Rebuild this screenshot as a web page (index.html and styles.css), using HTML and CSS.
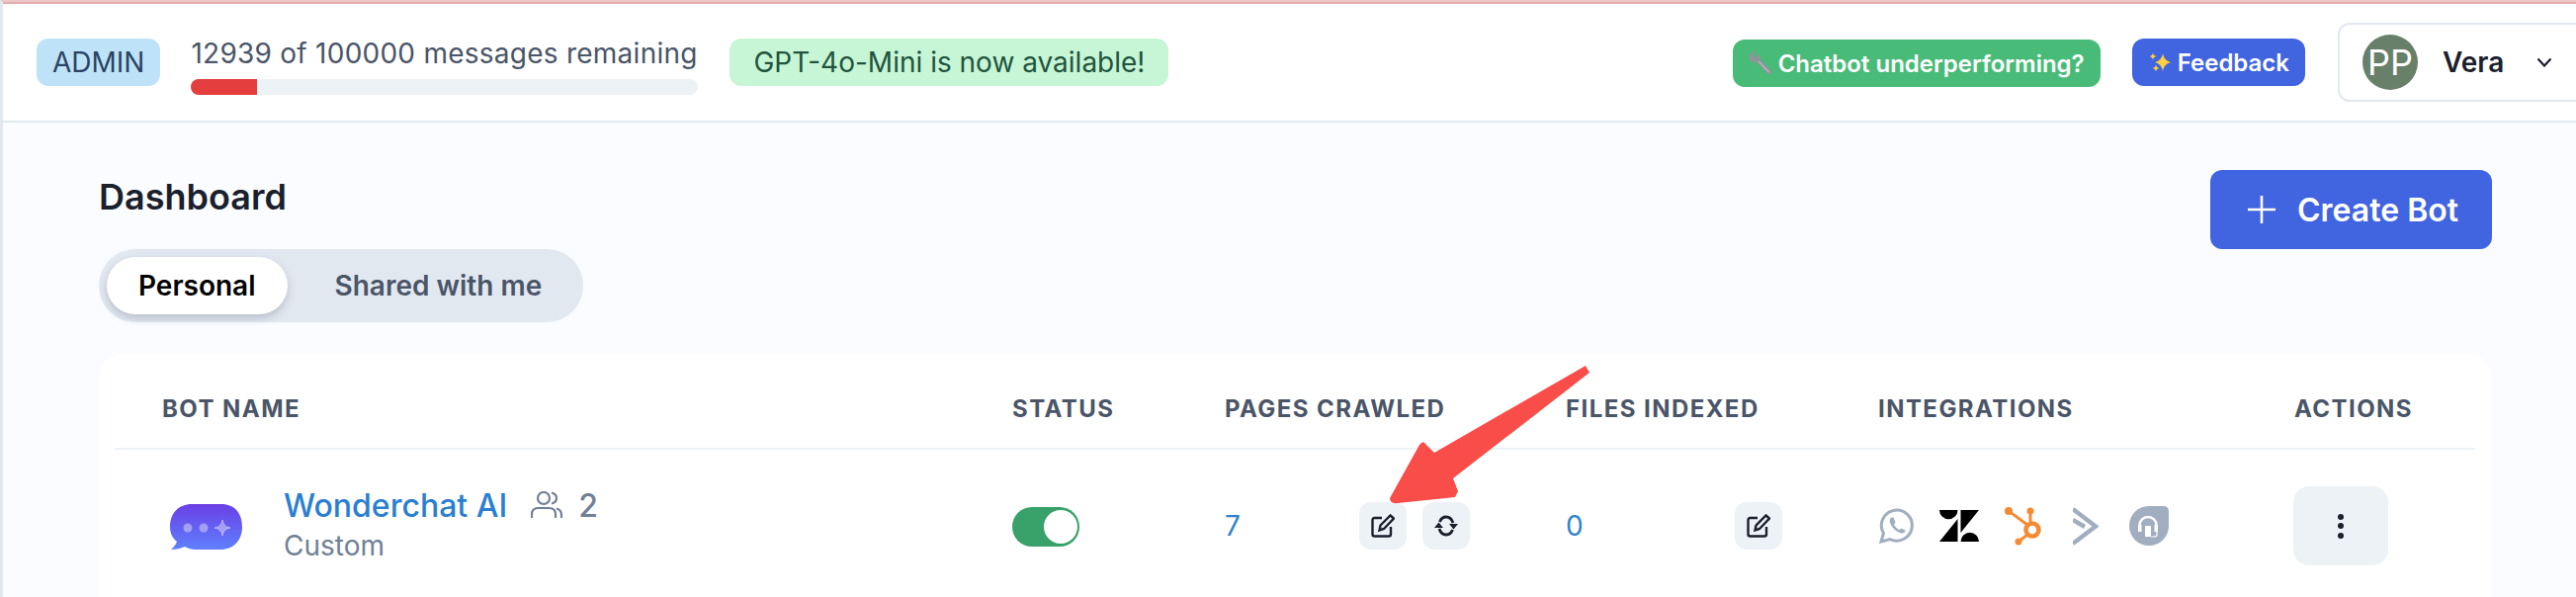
FILE: index.html
```html
<!DOCTYPE html>
<html lang="en">
<head>
    <meta charset="UTF-8">
    <title>Dashboard</title>
    <link rel="stylesheet" href="styles.css">
</head>
<body>
    <div class="app">
        <header class="topbar">
            <span class="badge badge-admin">ADMIN</span>
            <div class="usage">
                <p class="usage-text">12939 of 100000 messages remaining</p>
                <div class="usage-bar"><div class="usage-fill"></div></div>
            </div>
            <span class="badge badge-news">GPT-4o-Mini is now available!</span>

            <div class="topbar-right">
                <button class="pill pill-green">
                    <svg class="pill-icon" viewBox="0 0 24 24"><path d="M9 .5 Q3 0 1 4 Q0 8 3 10.500 Q6 12 8.500 11 L19 22.500 Q21 24 22.500 22.500 Q24 21 22.500 19 L11.500 8 Q12 5 10.500 3 L7 6 L4.500 3.500 Z" fill="#8f9499"/><path d="M10 10 L20.500 21" stroke="#b4b9be" stroke-width="1.500"/></svg>
                    Chatbot underperforming?
                </button>
                <button class="pill pill-blue">
                    <svg class="pill-icon" viewBox="0 0 24 30"><path d="M15 6 Q16 13 23 15 Q16 17 15 24 Q14 17 7 15 Q14 13 15 6 Z M5 5.500 Q5.500 8.500 8.500 9 Q5.500 9.500 5 12.500 Q4.500 9.500 1.500 9 Q4.500 8.500 5 5.500 Z M8 17.500 Q8.500 20.500 11.500 21 Q8.500 21.500 8 24.500 Q7.500 21.500 4.500 21 Q7.500 20.500 8 17.500 Z" fill="#fdd03f"/></svg>
                    Feedback
                </button>
                <div class="user-box">
                    <span class="avatar">PP</span>
                    <span class="user-name">Vera</span>
                    <svg class="chevron" viewBox="0 0 16 10"><path d="M1.500 1.500 L8 8.500 L14.500 1.500" fill="none" stroke="#1a202c" stroke-width="2.200"/></svg>
                </div>
            </div>
        </header>

        <main class="content">
            <div class="page-head">
                <div>
                    <h1 class="page-title">Dashboard</h1>
                    <div class="tabs">
                        <button class="tab tab-active">Personal</button>
                        <button class="tab">Shared with me</button>
                    </div>
                </div>
                <button class="create-btn">
                    <svg class="plus" viewBox="0 0 30 30"><path d="M15 1 V29 M1 15 H29" stroke="#fff" stroke-width="2.600"/></svg>
                    Create Bot
                </button>
            </div>

            <div class="card">
                <table class="bots">
                    <colgroup>
                        <col class="col-name"><col class="col-status"><col class="col-pages"><col class="col-files"><col class="col-int"><col class="col-actions">
                    </colgroup>
                    <thead>
                        <tr>
                            <th>Bot name</th>
                            <th>Status</th>
                            <th>Pages crawled</th>
                            <th>Files indexed</th>
                            <th>Integrations</th>
                            <th>Actions</th>
                        </tr>
                    </thead>
                    <tbody>
                        <tr>
                            <td>
                                <div class="bot">
                                    <svg class="bot-logo" viewBox="0 0 74 48">
                                        <defs>
                                            <linearGradient id="bubble" x1="0" y1="0" x2="0" y2="1">
                                                <stop offset="0" stop-color="#6b3fe6"/>
                                                <stop offset="1" stop-color="#5f80fd"/>
                                            </linearGradient>
                                        </defs>
                                        <path d="M22 0 H52 C65 0 73 9 73 23 C73 37 64 46 51 46 H26 C22 46 18 45 15 43 C11 45 6 46 1 46 C4 43 6 41 7 38 C2 34 0 29 0 23 C0 9 9 0 22 0 Z" fill="url(#bubble)"/>
                                        <circle cx="18" cy="24" r="4.500" fill="#fff" fill-opacity=".4"/>
                                        <circle cx="34" cy="24" r="4.500" fill="#fff" fill-opacity=".4"/>
                                        <path d="M53 16 Q54 23 61 24 Q54 25 53 32 Q52 25 45 24 Q52 23 53 16 Z" fill="#fff" fill-opacity=".4" stroke="#fff" stroke-opacity=".4"/>
                                    </svg>
                                    <div>
                                        <div class="bot-line">
                                            <a class="bot-link">Wonderchat AI</a>
                                            <svg class="users-icon" viewBox="0 0 32 28"><circle cx="13" cy="7" r="6" fill="none" stroke="#718096" stroke-width="2.200"/><path d="M1 27 V23 C1 19 4 17 8 17 H18 C22 17 25 19 25 23 V27 M21 1.500 C25 2.500 26 5 26 7 C26 9 25 11.500 21 12.500 M26 17.500 C29 18.500 31 20.500 31 24 V27" fill="none" stroke="#718096" stroke-width="2.200"/></svg>
                                            <span class="share-count">2</span>
                                        </div>
                                        <div class="bot-type">Custom</div>
                                    </div>
                                </div>
                            </td>
                            <td><span class="switch"><span class="switch-knob"></span></span></td>
                            <td>
                                <div class="count-row">
                                    <a class="count count-pages">7</a>
                                    <button class="icon-btn">
                                        <svg class="edit-icon" viewBox="0 0 24 24"><path d="M11 4 H3.500 A2 2 0 0 0 1.500 6 V20.500 A2 2 0 0 0 3.500 22.500 H18 A2 2 0 0 0 20 20.500 V13 M19.500 1.500 L23 4.500 L13 15 L8.500 16.500 L9.500 11.500 Z" fill="none" stroke="#1a202c" stroke-width="2.400"/></svg>
                                    </button>
                                    <button class="icon-btn">
                                        <svg class="edit-icon" viewBox="0 0 24 24"><path d="M5.500 8 C7 4 9.500 3 12 3 C15 3 17.500 4.500 19 9 M18.500 16 C17 20 14.500 21 12 21 C9 21 6.500 19.500 5 15" fill="none" stroke="#1a202c" stroke-width="2.800"/><path d="M15 10 H24 L19.500 15.500 Z M0 14 H9 L4.500 8.500 Z" fill="#1a202c"/></svg>
                                    </button>
                                </div>
                            </td>
                            <td>
                                <div class="count-row">
                                    <a class="count count-files">0</a>
                                    <button class="icon-btn">
                                        <svg class="edit-icon" viewBox="0 0 24 24"><path d="M11 4 H3.500 A2 2 0 0 0 1.500 6 V20.500 A2 2 0 0 0 3.500 22.500 H18 A2 2 0 0 0 20 20.500 V13 M19.500 1.500 L23 4.500 L13 15 L8.500 16.500 L9.500 11.500 Z" fill="none" stroke="#1a202c" stroke-width="2.400"/></svg>
                                    </button>
                                </div>
                            </td>
                            <td>
                                <div class="integrations">
                                    <svg class="int-whatsapp" viewBox="0 0 36 36"><path d="M2 34 L4.500 25.500 A15.500 15.500 0 1 1 11 31.500 Z" fill="none" stroke="#a0aec0" stroke-width="3"/><path d="M12.500 9.500 C10 11 10.500 14 12 17 C14 21 17.500 24 22 25.500 C24.500 26 26.500 24.500 26.500 22.500 L22.500 20.500 L20.500 22 C18 21 16 19 15 16.500 L16.500 14.500 L14.500 9.500 Z" fill="#a0aec0"/></svg>
                                    <svg class="int-zendesk" viewBox="0 0 40 32"><path d="M0 0 H18.500 A9.250 9.250 0 0 1 0 0 Z M18.500 9 V32 H0 Z M21.500 0 H40 L21.500 23 Z M21.500 32 A9.250 9.250 0 0 1 40 32 Z" fill="#000"/></svg>
                                    <svg class="int-hubspot" viewBox="0 0 38 40"><circle cx="29" cy="24" r="6.500" fill="none" stroke="#f58a35" stroke-width="4.500"/><path d="M5 5 L24 19 M27 5 V16 M15 36 L24 29" stroke="#f58a35" stroke-width="3" fill="none"/><circle cx="5" cy="5" r="4" fill="#f58a35"/><circle cx="27" cy="5" r="3.500" fill="#f58a35"/><circle cx="15" cy="36" r="3.500" fill="#f58a35"/></svg>
                                    <svg class="int-chevron" viewBox="0 0 26 39"><path d="M0 2 L23 19.500 L0 37 M0 13 L12 20" fill="none" stroke="#a0aec0" stroke-width="4.500"/></svg>
                                    <svg class="int-headset" viewBox="0 0 40 40"><path d="M20 0 H35 A5 5 0 0 1 40 5 V20 A20 20 0 1 1 20 0 Z" fill="#a0aec0"/><path d="M10.500 24 V19.500 A8.500 8.500 0 0 1 27.500 19.500 V24" fill="none" stroke="#fff" stroke-width="2.500"/><path d="M9 19 H12.500 V26 H9 Z M25.500 19 H29 V26 H25.500 Z M16 20 H22 V31 H16 Z" fill="#fff"/><path d="M28 26 V29 Q28 31 25 31 H22" fill="none" stroke="#fff" stroke-width="1.200"/></svg>
                                </div>
                            </td>
                            <td>
                                <button class="menu-btn"><span class="kebab"><i></i><i></i><i></i></span></button>
                            </td>
                        </tr>
                    </tbody>
                </table>
            </div>
        </main>
    </div>

    <!-- annotation arrow drawn on top of the screenshot -->
    <svg class="annotation" viewBox="0 0 2606 604"><path d="M1604 370 L1608 377 L1470 484 L1475 497 L1472 503 L1414 509 Q1406 510 1406 504 L1436 450 Q1440 445 1442 449 L1451 458 Z" fill="#f94d4a"/></svg>
</body>
</html>
```

FILE: styles.css
```css
* {
    box-sizing: border-box;
}

html, body {
    margin: 0;
    height: 604px;
    overflow: hidden;
}

body {
    position: relative;
    font-family: "Inter", "Liberation Sans", sans-serif;
    color: #1a202c;
    background: #fafcff;
}

p, h1 {
    margin: 0;
}

button {
    font-family: inherit;
    border: none;
    cursor: pointer;
}

.app {
    height: 604px;
    border-top: 2px solid #efc6c6;
    border-left: 3px solid #e2e8f0;
}

/* top bar */
.topbar {
    display: flex;
    align-items: center;
    height: 122px;
    padding-left: 34px;
    background: #fff;
    border-top: 2px solid #e2aeae;
    border-bottom: 2px solid #e2e8f0;
}

.badge {
    display: flex;
    align-items: center;
    height: 48px;
    border-radius: 12px;
    font-size: 28px;
    white-space: nowrap;
}

.badge-admin {
    padding: 0 16px;
    color: #2a4365;
    background: #bee3f8;
}

.badge-news {
    padding: 0 24px;
    color: #22543d;
    background: #c6f6d5;
}

.usage {
    width: 513px;
    margin: 0 32px 0 31px;
    padding-top: 6px;
}

.usage-text {
    font-size: 28px;
    line-height: 36px;
    letter-spacing: .25px;
    color: #4a5568;
    white-space: nowrap;
}

.usage-bar {
    height: 16px;
    margin-top: 8px;
    border-radius: 8px;
    overflow: hidden;
    background: #edf2f7;
}

.usage-fill {
    width: 13%;
    height: 100%;
    background: #e53e3e;
}

.topbar-right {
    display: flex;
    align-items: center;
    gap: 32px;
    margin-left: auto;
}

.pill {
    display: flex;
    align-items: center;
    gap: 6px;
    height: 48px;
    padding: 0 16px;
    border-radius: 12px;
    color: #fff;
    font-size: 24px;
    font-weight: 600;
    white-space: nowrap;
}

.pill-green {
    margin-top: 2px;
    background: #48bb78;
}

.pill-blue {
    background: #4164e0;
}

.pill-icon {
    width: 24px;
    height: 30px;
}

.user-box {
    display: flex;
    align-items: center;
    width: 241px;
    height: 80px;
    margin-left: 1px;
    padding-left: 23px;
    border: 2px solid #e2e8f0;
    border-right: none;
    border-radius: 12px 0 0 12px;
    background: #fff;
}

.avatar {
    display: flex;
    align-items: center;
    justify-content: center;
    flex: none;
    width: 56px;
    height: 56px;
    border-radius: 50%;
    color: #fff;
    font-size: 36px;
    background: #68806a;
}

.user-name {
    margin-left: 25px;
    font-size: 28px;
    font-weight: 600;
}

.chevron {
    width: 16px;
    height: 10px;
    margin-left: 33px;
}

/* page head */
.content {
    padding: 48px 85px 0 97px;
}

.page-head {
    display: flex;
    justify-content: space-between;
    align-items: flex-start;
}

.page-title {
    font-size: 36px;
    line-height: 54px;
    font-weight: 600;
    margin-bottom: 26px;
}

.tabs {
    display: inline-flex;
    align-items: center;
    gap: 16px;
    height: 74px;
    padding: 0 8px;
    border-radius: 37px;
    background: #e2e8f0;
}

.tab {
    height: 58px;
    padding: 0 34px 0 32px;
    border-radius: 29px;
    font-size: 28px;
    font-weight: 600;
    color: #4a5568;
    background: transparent;
}

.tab-active {
    padding: 0 32px;
    color: #000;
    background: #fff;
    box-shadow: 0 4px 8px rgba(45, 55, 72, .22);
}

.create-btn {
    display: flex;
    align-items: center;
    gap: 21px;
    width: 285px;
    height: 80px;
    padding-left: 37px;
    border-radius: 12px;
    color: #fff;
    font-size: 32px;
    font-weight: 600;
    white-space: nowrap;
    background: #4164e0;
}

.plus {
    width: 30px;
    height: 30px;
}

/* table */
.card {
    margin-top: 32px;
    height: 260px;
    padding: 0 16px;
    border-radius: 24px 24px 0 0;
    background: #fff;
}

.bots {
    width: 2388px;
    table-layout: fixed;
    border-collapse: collapse;
}

.col-name { width: 860px; }
.col-status { width: 215px; }
.col-pages { width: 345px; }
.col-files { width: 316px; }
.col-int { width: 421px; }
.col-actions { width: 231px; }

.bots th {
    height: 96px;
    padding: 16px 0 0 48px;
    text-align: left;
    font-size: 24px;
    font-weight: 700;
    letter-spacing: .06em;
    text-transform: uppercase;
    color: #4a5568;
    border-bottom: 2px solid #edf2f7;
    white-space: nowrap;
}

.bots td {
    padding: 37px 0 0 48px;
    vertical-align: top;
}

.bot {
    display: flex;
    align-items: center;
    gap: 41px;
    margin-left: 8px;
    height: 80px;
}

.bot-logo {
    width: 74px;
    height: 48px;
    margin-top: 4px;
}

.bot-line {
    display: flex;
    align-items: center;
    height: 38px;
    margin-top: -2px;
}

.bot-link {
    font-size: 32px;
    font-weight: 500;
    color: #2b7fd0;
}

.users-icon {
    width: 32px;
    height: 28px;
    margin-left: 24px;
}

.share-count {
    margin-left: 16px;
    font-size: 32px;
    font-weight: 500;
    color: #718096;
}

.bot-type {
    margin-top: 4px;
    font-size: 28px;
    line-height: 36px;
    color: #718096;
}

.switch {
    display: flex;
    justify-content: flex-end;
    align-items: center;
    width: 68px;
    height: 40px;
    margin-top: 21px;
    padding-right: 2px;
    border-radius: 20px;
    background: #38a169;
}

.switch-knob {
    width: 34px;
    height: 34px;
    border-radius: 50%;
    background: #fff;
}

.count-row {
    display: flex;
    align-items: center;
    gap: 16px;
    height: 80px;
}

.count {
    font-size: 28px;
    color: #3182ce;
}

.count-pages { width: 120px; }
.count-files { width: 155px; }

.icon-btn {
    display: flex;
    align-items: center;
    justify-content: center;
    flex: none;
    width: 48px;
    height: 48px;
    padding: 0;
    border-radius: 12px;
    background: #edf2f7;
}

.edit-icon {
    width: 24px;
    height: 24px;
}

.integrations {
    display: flex;
    align-items: center;
    height: 80px;
}

.integrations svg {
    flex: none;
}

.int-whatsapp { width: 36px; height: 36px; margin-left: 1px; }
.int-zendesk { width: 40px; height: 32px; margin-left: 25px; }
.int-hubspot { width: 38px; height: 40px; margin-left: 25px; }
.int-chevron { width: 26px; height: 39px; margin-left: 32px; }
.int-headset { width: 40px; height: 40px; margin-left: 31px; }

.menu-btn {
    display: flex;
    align-items: center;
    justify-content: center;
    width: 96px;
    height: 80px;
    margin-left: -1px;
    padding: 0;
    border-radius: 16px;
    background: #edf2f7;
}

.kebab {
    display: flex;
    flex-direction: column;
    gap: 3.5px;
}

.kebab i {
    width: 6px;
    height: 6px;
    border-radius: 50%;
    background: #1a202c;
}

.annotation {
    position: absolute;
    top: 0;
    left: 0;
    width: 2606px;
    height: 604px;
    pointer-events: none;
}
```
